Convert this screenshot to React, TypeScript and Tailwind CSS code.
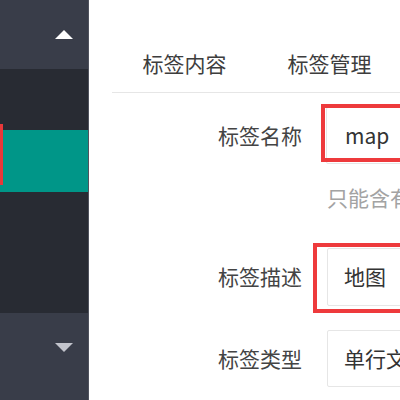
import React from "react";

const font = { fontFamily: '"Noto Sans CJK SC", "Noto Sans", sans-serif' };

export default function App() {
  return (
    <div className="flex w-[400px] h-[400px] overflow-hidden bg-white" style={font}>
      {/* Sidebar */}
      <div className="relative flex flex-col w-[88px] shrink-0 h-full bg-[#393d49]">
        <div className="h-[69px] flex items-center justify-end pr-[15px]">
          <svg width="18" height="9" viewBox="0 0 18 9">
            <polygon points="9,0 18,9 0,9" fill="#ffffff" />
          </svg>
        </div>
        <div className="h-[61px] bg-[#282b33]" />
        <div className="h-[62px] bg-[#009688]" />
        <div className="h-[121px] bg-[#282b33]" />
        <div className="flex-1 flex items-start justify-end pr-[15px] pt-[30px]">
          <svg width="18" height="9" viewBox="0 0 18 9">
            <polygon points="0,0 18,0 9,9" fill="#c2c4cc" />
          </svg>
        </div>
        <div className="absolute left-0 top-[124px] w-[3px] h-[61px] bg-[#e8383a]" />
      </div>
      <div className="w-px shrink-0 h-full bg-[#50535e]" />

      {/* Main */}
      <div className="flex-1 min-w-0 pl-[23px] pt-[35px]">
        <div className="flex h-[58px] border-b border-[#e6e6e6] w-[400px]">
          <div className="w-[145px] shrink-0 flex items-center justify-center text-[21px] text-[#3d3d3d]">
            标签内容
          </div>
          <div className="w-[145px] shrink-0 flex items-center justify-center text-[21px] text-[#3d3d3d]">
            标签管理
          </div>
        </div>

        {/* Row 1 */}
        <div className="flex items-center mt-[14px] h-[57px]">
          <div className="w-[190px] shrink-0 text-right text-[21px] text-[#444]">标签名称</div>
          <div className="relative ml-[24px] w-[200px] shrink-0 h-full">
            <div className="h-full border border-[#e6e6e6] rounded-[2px] flex items-center pl-[18px] text-[21px] text-[#333]">
              map
            </div>
            <div className="absolute left-[-5px] top-[-3px] bottom-[2px] right-[-20px] border-[4px] border-[#ee3a3c]" />
          </div>
        </div>
        <div className="ml-[215px] mt-[21px] h-[25px] flex items-center text-[21px] text-[#a3a3a3] whitespace-nowrap">
          只能含有字母
        </div>

        {/* Row 2 */}
        <div className="flex items-center mt-[38px] h-[58px]">
          <div className="w-[190px] shrink-0 text-right text-[21px] text-[#444]">标签描述</div>
          <div className="relative ml-[25px] w-[200px] shrink-0 h-full">
            <div className="h-full border border-[#e6e6e6] rounded-[2px] flex items-center pl-[16px] text-[21px] text-[#333]">
              地图
            </div>
            <div className="absolute left-[-14px] top-[-5px] bottom-[-7px] right-[-20px] border-[4px] border-[#ee3a3c]" />
          </div>
        </div>

        {/* Row 3 */}
        <div className="flex items-center mt-[24px] h-[57px]">
          <div className="w-[190px] shrink-0 text-right text-[21px] text-[#444]">标签类型</div>
          <div className="relative ml-[25px] w-[200px] shrink-0 h-full">
            <div className="h-full border border-[#e6e6e6] rounded-[2px] flex items-center pl-[16px] text-[21px] text-[#333] whitespace-nowrap">
              单行文本
            </div>
          </div>
        </div>
      </div>
    </div>
  );
}
